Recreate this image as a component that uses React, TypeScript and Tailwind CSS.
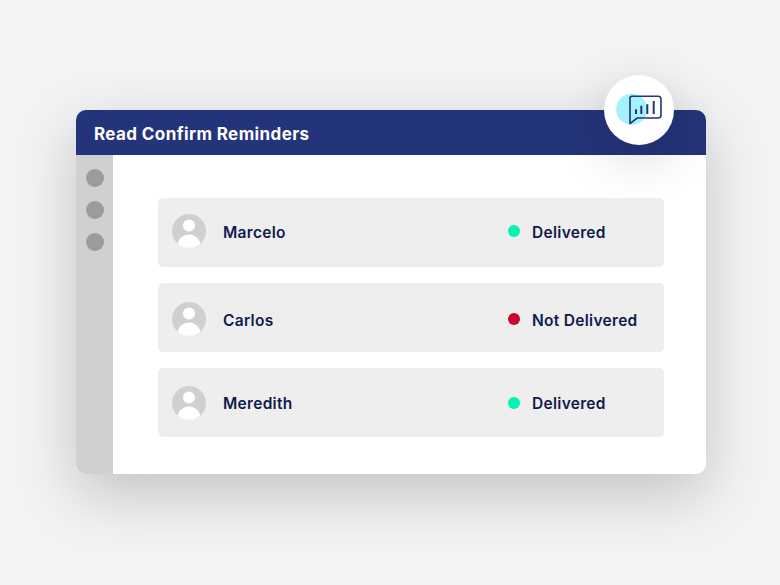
const font = { fontFamily: '"Inter", "Liberation Sans", sans-serif' };

const rows = [
  { name: "Marcelo", status: "Delivered", dot: "bg-[#05f2b5]", cls: "pb-[3px]" },
  { name: "Carlos", status: "Not Delivered", dot: "bg-[#c8082d]", cls: "mt-4 pt-[3px]" },
  { name: "Meredith", status: "Delivered", dot: "bg-[#05f2b5]", cls: "mt-4" },
];

function Avatar() {
  return (
    <svg width="34" height="34" viewBox="0 0 34 34" className="shrink-0">
      <defs>
        <clipPath id="avatar-clip">
          <circle cx="17" cy="17" r="17" />
        </clipPath>
      </defs>
      <circle cx="17" cy="17" r="17" fill="#d0d0d0" />
      <g clipPath="url(#avatar-clip)" fill="#ffffff">
        <circle cx="17" cy="11.5" r="6" />
        <ellipse cx="17" cy="32" rx="11.5" ry="11.5" />
      </g>
    </svg>
  );
}

function BadgeIcon() {
  return (
    <svg width="70" height="70" viewBox="0 0 70 70">
      <circle cx="27.7" cy="34.3" r="15.5" fill="#a5f3fa" />
      <path
        d="M28 21.3H54a3 3 0 0 1 3 3V40a3 3 0 0 1-3 3H33.2L26 48.6V23.3a2 2 0 0 1 2-2Z"
        fill="none"
        stroke="#24347a"
        strokeWidth="1.6"
        strokeLinejoin="round"
      />
      <path
        d="M32 34.3V39M37.3 30.7V39M43.3 29.3V39M49.7 26V39"
        fill="none"
        stroke="#24347a"
        strokeWidth="2"
      />
    </svg>
  );
}

export default function App() {
  return (
    <div className="w-[780px] h-[585px] bg-[#f2f3f5] pt-[110px] pl-[76px] overflow-hidden" style={font}>
      <div className="relative w-[630px] h-[364px] rounded-[10px] flex flex-col shadow-[0_20px_60px_rgba(0,0,0,0.2)]">
        <div className="h-[45px] shrink-0 bg-[#24347a] rounded-t-[10px] flex items-center pl-[18px] pt-[5px] text-white text-[17px] font-bold tracking-[0.4px]">
          Read Confirm Reminders
        </div>
        <div className="flex flex-1 min-h-0 rounded-b-[10px] overflow-hidden bg-white">
          <div className="w-[37px] shrink-0 bg-[#d0d0d0] flex flex-col items-center pt-[14px] gap-[14px]">
            <div className="w-[18px] h-[18px] rounded-full bg-[#9b9b9b]" />
            <div className="w-[18px] h-[18px] rounded-full bg-[#9b9b9b]" />
            <div className="w-[18px] h-[18px] rounded-full bg-[#9b9b9b]" />
          </div>
          <div className="flex-1 pl-[45px] pr-[42px] pt-[43px] flex flex-col">
            {rows.map((r) => (
              <div key={r.name} className={`h-[69px] ${r.cls} bg-[#eeeeee] rounded-[5px] flex items-center pl-[14px]`}>
                <Avatar />
                <span className="ml-[17px] w-[285px] pt-[3px] text-[#101a4d] text-[15.5px] font-semibold tracking-[0.3px]">{r.name}</span>
                <span className={`w-3 h-3 rounded-full ${r.dot}`} />
                <span className="ml-3 pt-[3px] text-[#101a4d] text-[15.5px] font-semibold tracking-[0.3px]">{r.status}</span>
              </div>
            ))}
          </div>
        </div>
        <div className="absolute left-[528px] top-[-35px] w-[70px] h-[70px] rounded-full bg-white shadow-[0_14px_50px_rgba(0,0,0,0.16)]">
          <BadgeIcon />
        </div>
      </div>
    </div>
  );
}
